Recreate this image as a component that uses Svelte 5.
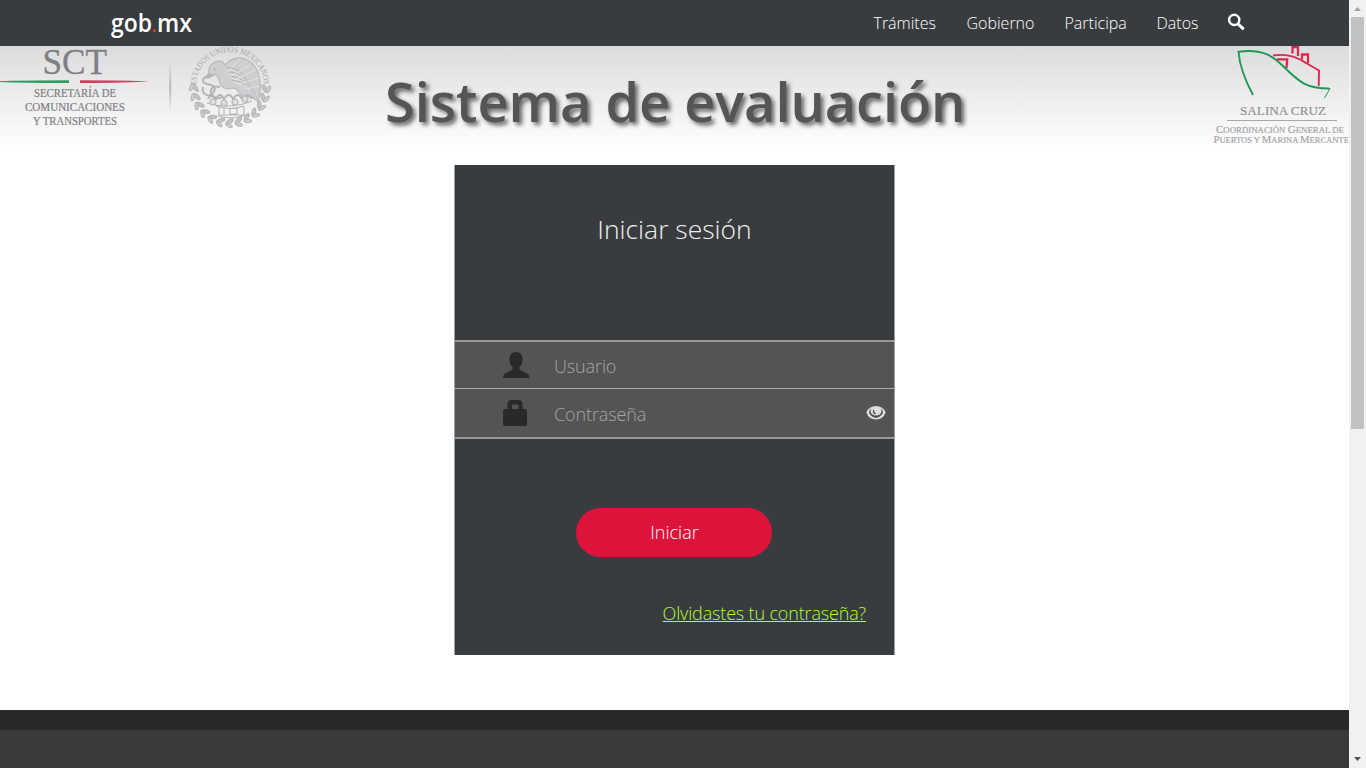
<script>
  const nav = [
    { label: 'Trámites', w: 63 },
    { label: 'Gobierno', w: 68 },
    { label: 'Participa', w: 62 },
    { label: 'Datos', w: 42 }
  ];
  const leaves = Array.from({ length: 13 }, (_, i) => 2 + i * 14.67);
  const feathers = [0, 1, 2, 3, 4, 5, 6, 7];
</script>

<div class="window">
  <div class="page">
    <header>
      <svg class="brand" width="84" height="32" viewBox="0 0 84 32" role="img" aria-label="gob.mx">
        <text x="0" y="22" textLength="41" lengthAdjust="spacingAndGlyphs">gob</text>
        <circle cx="43.4" cy="20.7" r="1.7" fill="#e0301c" />
        <text x="46" y="22" textLength="35" lengthAdjust="spacingAndGlyphs">mx</text>
      </svg>
      <nav>
        {#each nav as item}
          <a href="#top" style="width:{item.w}px">{item.label}</a>
        {/each}
        <svg width="18" height="18" viewBox="0 0 18 18" aria-label="Buscar">
          <circle cx="7.2" cy="6.9" r="5.1" fill="none" stroke="#fff" stroke-width="2.4" />
          <path d="M11 10.8l4.8 4.5" stroke="#fff" stroke-width="3" stroke-linecap="round" />
        </svg>
      </nav>
    </header>

    <section class="banner">
      <svg class="sct" width="280" height="104" viewBox="0 46 280 104">
        <g fill="#7f8083" font-family="'Liberation Serif', serif" stroke="#7f8083" stroke-width=".2">
          <text x="42.500" y="73.500" font-size="35" stroke-width=".3" textLength="64.500" lengthAdjust="spacingAndGlyphs">SCT</text>
          <text x="34" y="97" font-size="11.8" textLength="82" lengthAdjust="spacingAndGlyphs">SECRETARÍA DE</text>
          <text x="25" y="111" font-size="11.8" textLength="100" lengthAdjust="spacingAndGlyphs">COMUNICACIONES</text>
          <text x="33" y="125" font-size="11.8" textLength="84" lengthAdjust="spacingAndGlyphs">Y TRANSPORTES</text>
        </g>
        <path d="M0 81.100Q20 80.200 69 80.200V83Q20 82.900 0 82Z" fill="#2f9d62" />
        <path d="M149 81.500Q129 80.200 80 80.200V83Q129 82.800 149 81.500Z" fill="#d83a5c" />
        <linearGradient id="rule" x1="0" y1="0" x2="0" y2="1">
          <stop offset="0" stop-color="#b5b5b5" stop-opacity="0" />
          <stop offset=".5" stop-color="#b5b5b5" />
          <stop offset="1" stop-color="#b5b5b5" stop-opacity="0" />
        </linearGradient>
        <rect x="169.200" y="62" width="2" height="49" fill="url(#rule)" />

        <g transform="translate(230 87)" fill="none" stroke="#b4b5b8" stroke-width="1.1">
          <path id="arc" d="M-34 -1A34 34 0 0 1 34 -1" stroke="none" />
          <text class="arc"><textPath href="#arc" startOffset="1" textLength="104" lengthAdjust="spacingAndGlyphs">ESTADOS UNIDOS MEXICANOS</textPath></text>
          {#each leaves as a}
            <g transform="rotate({a}) translate(36.700 0)">
              <ellipse cx="-2" cy="-1" rx="1.700" ry="4" transform="rotate(-32)" fill="#c4c5c7" />
              <ellipse cx="2" cy="0" rx="1.500" ry="3.700" transform="rotate(30)" fill="#d2d2d4" />
            </g>
          {/each}
          <path d="M-20 -11Q-24 -20 -15 -25Q-8 -28 -5 -22Q2 -30 12 -29Q25 -26 29 -11Q32 2 28 15L20 8L13 10L5 1L-3 2Q-10 0 -11 -7Q-12 -12 -17 -13Z" fill="#cfcfd1" />
          <path d="M-21 -14L-25 -9L-21 -9L-16 -12" fill="#b4b5b8" />
          <circle cx="-15" cy="-18" r=".8" fill="#888" />
          {#each feathers as i}
            <path d="M{-4 + i} {-19 + i * 2}Q{13 + i} {-22 + i * 3} {27 - i} {12 - i}" stroke={i % 2 ? '#e8e8e9' : '#aaabad'} stroke-width=".8" />
          {/each}
          <path d="M-3 -14L10 -28M0 -10L20 -22M4 -7L26 -17M9 -3L29 -9M15 2L29 -1" stroke="#e5e5e6" stroke-width=".8" />
          <path d="M-21 -10C-27 -12 -30 -4 -23 -3S-13 1 -17 6S-29 7 -27 0M-10 0Q-20 -2 -19 6T-7 10" stroke-width="2" />
          <path d="M-22 12q4-7 8 0q4-8 8 0q5-8 9 0q5-8 9 0q5-7 10 0" stroke-width="1.800" />
          <path d="M-23 16Q0 23 22 14M-14 19q14 5 28 0M-11 21v7h25v-8M-6 22v6M0 22v5h7v-6M-12 29Q2 33 16 28" />
          <g fill="#dededf">
            <circle cx="-17" cy="15" r="3" /><circle cx="-6" cy="16" r="3" />
            <circle cx="5" cy="15" r="3" /><circle cx="15" cy="12" r="3" />
          </g>
        </g>
      </svg>

      <h1>Sistema de evaluación</h1>

      <svg class="port" width="136" height="104" viewBox="1213 46 136 104">
        <g fill="none">
          <path d="M1253 95Q1240 71 1238.500 51.800C1262 48.500 1273 56 1283 66C1300 83 1307 88.500 1329 88.500" stroke="#1d9955" stroke-width="1.900" />
          <path d="M1322 88.500H1330L1324.500 98" stroke="#1d9955" stroke-width="1" />
          <path d="M1273 55.500Q1291 52.500 1306 63L1319 70.500L1318.700 86" stroke="#dc2850" stroke-width="1.900" />
          <path d="M1292.500 53.500V47.200H1298V56M1302 59.500V54.500H1308V63M1277 59.300H1287.200L1286.500 68" stroke="#dc2850" stroke-width="2.300" />
        </g>
        <path d="M1227 120.500H1337" stroke="#a8a8a8" stroke-width="1.2" />
        <g fill="#8f8f8f" font-family="'Liberation Serif', serif">
          <text x="1240" y="115.300" font-size="13" stroke="#8f8f8f" stroke-width=".15" textLength="86" lengthAdjust="spacingAndGlyphs">SALINA CRUZ</text>
          <g fill="#a3a3a3" font-size="8" stroke="#a3a3a3" stroke-width=".15">
            <text x="1216" y="132.500" textLength="128" lengthAdjust="spacingAndGlyphs"><tspan class="cap">C</tspan>OORDINACIÓN <tspan class="cap">G</tspan>ENERAL DE</text>
            <text x="1213.500" y="143" textLength="135.500" lengthAdjust="spacingAndGlyphs"><tspan class="cap">P</tspan>UERTOS Y <tspan class="cap">M</tspan>ARINA <tspan class="cap">M</tspan>ERCANTE</text>
          </g>
        </g>
      </svg>
    </section>

    <main>
      <form onsubmit={(e) => e.preventDefault()}>
        <h2>Iniciar sesión</h2>
        <div class="fields">
          <label>
            <svg width="28" height="28" viewBox="0 0 28 28"><path d="M14 1C9.500 1 7.500 4 7.500 8.500C7.500 12 8.500 14.500 10.500 16V18.500L3 22.500Q1 23.600 1 27H27.500Q27.500 23.600 25 22.500L17.500 18.500V16C19.500 14.500 20.500 12 20.500 8.500C20.500 4 18.500 1 14 1Z" /></svg>
            <input type="text" placeholder="Usuario" />
          </label>
          <label>
            <svg width="28" height="28" viewBox="0 0 28 28"><path fill-rule="evenodd" d="M3 10H5.500V5Q5.500 1 9.500 1H16.500Q20.500 1 20.500 5V10H23Q25 10 25 12V25Q25 27 23 27H3Q1 27 1 25V12Q1 10 3 10ZM10 10H16.500V5.500H10Z" /></svg>
            <input type="password" placeholder="Contraseña" />
            <svg class="eye" width="20" height="16" viewBox="0 0 20 16">
              <path d="M.3 7.500Q3 1 10 1T19.700 7.500Q17 14.500 10 14.500T.3 7.500Z" fill="#dedede" />
              <path d="M5.300 3.500Q1.200 7 4.500 10Q7 12.900 10 12.900T15.500 10Q18.800 7 14.700 3.500Q16.500 7 14 9.200Q10 12 6 9.200Q3.500 7 5.300 3.500Z" fill="#505050" />
              <path d="M7.800 5Q6.800 8.500 9.800 8.700" fill="none" stroke="#505050" stroke-width="1.300" />
            </svg>
          </label>
        </div>
        <button>Iniciar</button>
        <a class="forgot" href="#top">Olvidastes tu contraseña?</a>
      </form>
    </main>
    <footer></footer>
  </div>

  <aside class="scrollbar" aria-hidden="true">
    <svg width="17" height="17"><path d="M5 11L8.500 7L12 11Z" fill="#a3a3a3" /></svg>
    <div class="thumb"></div>
    <svg class="down" width="17" height="17"><path d="M5 6L8.500 10L12 6Z" fill="#505050" /></svg>
  </aside>
</div>

<style>
  :global(body) { margin: 0; overflow: hidden; }
  * { box-sizing: border-box; }
  svg { display: block; flex: none; overflow: visible; }
  .window { display: flex; width: 1366px; height: 768px; overflow: hidden; font-family: 'Open Sans', sans-serif; background: #fff; }
  .page { width: 1349px; display: flex; flex-direction: column; }
  header { height: 46px; flex: none; background: #393c3e; display: flex; justify-content: space-between; padding: 0 104px 0 111px; }
  .brand { margin-top: 10px; font: 600 25px 'Open Sans', sans-serif; fill: #fff; }
  nav { display: flex; gap: 30px; align-items: center; }
  nav a { color: #fff; font-size: 16px; font-weight: 300; line-height: 46px; text-decoration: none; white-space: nowrap; }
  nav svg { margin: -3px 0 0 -1.5px; }
  .banner { height: 104px; flex: none; display: flex; background: linear-gradient(#dcdcdc, #fff); }
  .arc { font: 8.500px 'Liberation Serif', serif; fill: #a5a6a9; stroke: none; }
  .cap { font-size: 10px; }
  h1 { margin: 17px 0 0 105px; width: 579px; font-size: 54px; font-weight: 600; line-height: 76px; color: #555; text-shadow: 3px 3px 4px #666; white-space: nowrap; }
  .port { margin-left: auto; }
  main { height: 560px; flex: none; padding-top: 15px; }
  form { width: 441px; height: 490px; margin-left: 454px; background: #393c3e; border: solid #a0a0a0; border-width: 0 1px; display: flex; flex-direction: column; }
  h2 { margin: 44px 0 0; text-align: center; color: #f0f0f0; font-size: 26.500px; font-weight: 300; line-height: 40px; }
  .fields { margin-top: 91px; height: 99px; background: #545454; border-top: 2px solid #999; border-bottom: 2px solid #999; }
  label { height: 46px; display: flex; align-items: center; padding-left: 47px; }
  label + label { height: 49px; padding-top: 2px; border-top: 1px solid #aaa; }
  label svg { fill: #27292b; margin-top: -1px; }
  label + label svg { margin-top: -2px; }
  label + label .eye { margin-left: -1px; }
  input { width: 313px; margin-left: 24px; padding: 0; border: 0; outline: 0; background: none; font: 300 18px/30px 'Open Sans', sans-serif; letter-spacing: -.12px; color: #ddd; }
  label:first-child input { position: relative; top: 1px; }
  input::placeholder { color: #a5a5a5; opacity: 1; }
  button { width: 196px; height: 49px; margin: 69px 0 0 121px; padding: 0 0 2px 1px; border: 0; border-radius: 25px; background: #dc143c; color: #fff; font: 300 18px 'Open Sans', sans-serif; }
  .forgot { align-self: flex-end; margin: 43px 28px 0 0; color: #adff2f; font-size: 18px; font-weight: 300; line-height: 26px; letter-spacing: -.16px; }
  footer { height: 58px; background: #393a3b; border-top: 20px solid #27292a; }
  .scrollbar { width: 17px; height: 768px; background: #f1f1f1; display: flex; flex-direction: column; }
  .thumb { width: 13px; height: 412px; margin-left: 2px; background: #c1c1c1; }
  .down { margin-top: auto; }
</style>
